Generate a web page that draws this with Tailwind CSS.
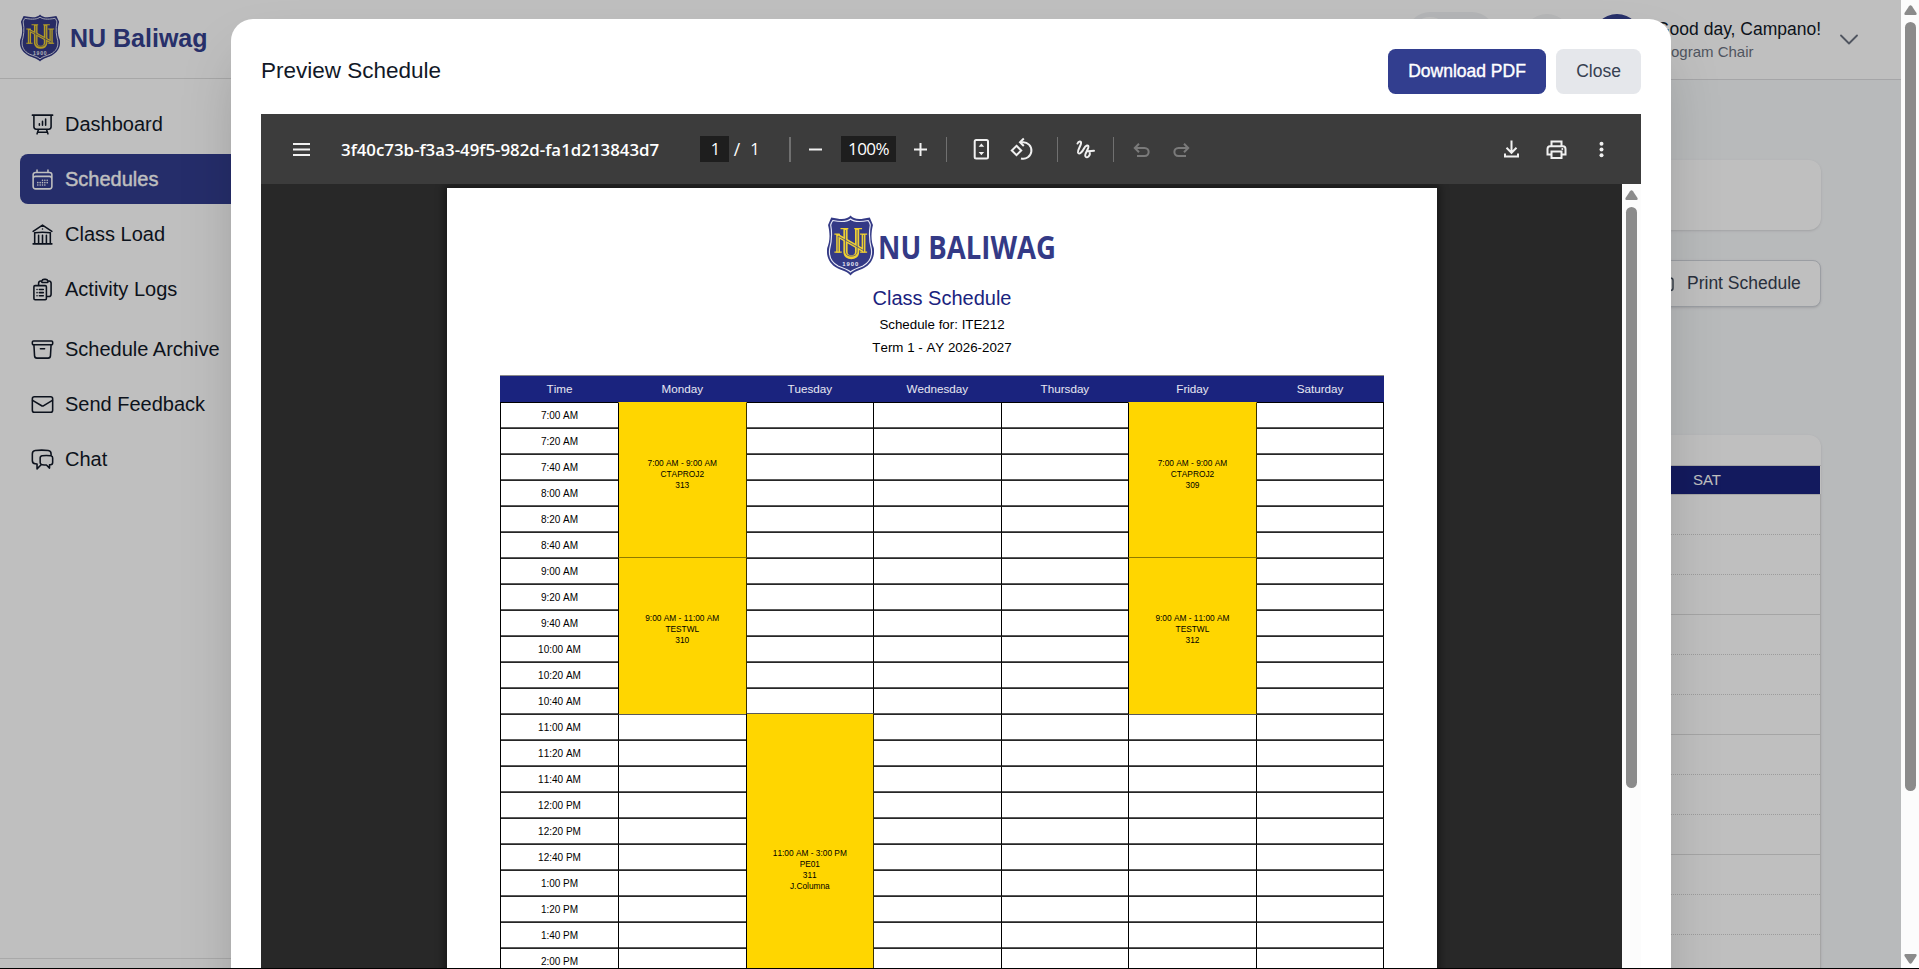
<!DOCTYPE html>
<html lang="en">
<head>
<meta charset="utf-8">
<title>NU Baliwag – Schedules</title>
<script src="https://cdn.jsdelivr.net/npm/@tailwindcss/browser@4"></script>
</head>
<body class="h-[969px] w-[1919px] overflow-hidden bg-black font-['Liberation_Sans',Arial,sans-serif]">

<svg class="hidden">
  <symbol id="crest" viewBox="1 0 44.500 61" preserveAspectRatio="none">
    <path d="M23.300 0.500C25.500 3.500 30 5 36 3.500L41.500 2.500L44.500 10C42.200 20 43 27 45.300 33C46.500 42 43 49 36 53C31 55.500 26 56.500 23.300 60.500C20.500 56.500 15.500 55.500 10.500 53C3.500 49 0 42 1.200 33C3.500 27 4.300 20 2 10L5 2.500L10.500 3.500C16.500 5 21 3.500 23.300 0.500Z" fill="#343a86"/>
    <path d="M23.300 4C26 6.500 31 7.500 40 5.500C41 7 41.500 8 42 10C40.300 20 41.500 28 43 34C44 42 41 47.500 35 51C31 53 26 54 23.300 57C20.500 54 15.500 53 11.500 51C5.500 47.500 2.500 42 3.500 34C5 28 6.200 20 4.500 10C5 8 5.500 7 6.500 5.500C15.500 7.500 20.500 6.500 23.300 4Z" fill="none" stroke="#e8e9f5" stroke-width="1.100"/>
    <g fill="none" stroke="#efd032">
      <path stroke-width="4" d="M18.500 14V37C18.500 44 29.500 44 29.500 37V14"/>
      <path stroke-width="1.300" d="M13.800 13.700H21.200M26.800 13.700H34.200M8 19.200H13M32.300 19.200H39M8 37.200H15M32.300 37.200H39"/>
      <path stroke-width="3.600" d="M11.500 19V37.500M35.600 19V37.500M11 20.500L35.600 35.500"/>
    </g>
    <g fill="none" stroke="#343a86" stroke-width=".7">
      <path d="M18.500 15V37C18.500 42.500 29.500 42.500 29.500 37V15"/>
      <path d="M11.500 21V36.500M35.600 20V36.500M11.500 21L35.600 35.500"/>
    </g>
    <text x="23.500" y="51.500" text-anchor="middle" font-family="Liberation Sans" font-weight="700" font-size="5.600" letter-spacing=".9" fill="#e8e9f5">1900</text>
  </symbol>
</svg>

<div class="relative flex h-[968px] w-[1919px] overflow-hidden">

  <!-- application page -->
  <div class="relative flex h-[968px] w-[1901px] overflow-hidden bg-[#f6f8fa]">
    <aside class="flex w-[300px] shrink-0 flex-col bg-white">
      <div class="flex h-[79px] items-center border-b border-[#dfdfdf] pb-[2px] pl-5">
        <svg class="h-[48px] w-[40px]"><use href="#crest"/></svg>
        <span class="ml-[10px] text-[25px] font-bold leading-none text-[#35408e]">NU Baliwag</span>
      </div>
      <nav class="mt-[20px] flex flex-1 flex-col gap-[5px] pl-5 text-[20px] text-[#111827]" id="nav">
        <a class="flex h-[50px] items-center gap-[10px] rounded-l-[8px] pl-[10px]"><svg class="size-[25px]" viewBox="0 0 24 24" fill="none" stroke="currentColor" stroke-width="1.500" stroke-linecap="round" stroke-linejoin="round"><path d="M3.750 3v11.250A2.250 2.250 0 006 16.500h2.250M3.750 3h-1.500m1.500 0h16.500m0 0h1.500m-1.500 0v11.250A2.250 2.250 0 0118 16.500h-2.250m-7.500 0h7.500m-7.500 0l-1 3m8.500-3l1 3m0 0l.5 1.500m-.5-1.500h-9.500m0 0l-.5 1.500M9 11.250v1.500M12 9v3.750m3-6v6"/></svg>Dashboard</a>
        <a class="flex h-[50px] items-center gap-[10px] rounded-l-[8px] bg-[#323c8e] pl-[10px] text-white [-webkit-text-stroke:0.4px_white]"><svg class="size-[25px]" viewBox="0 0 24 24" fill="none" stroke="currentColor" stroke-width="1.500" stroke-linecap="round" stroke-linejoin="round"><path d="M6.750 3v2.250M17.250 3v2.250M3 18.750V7.500a2.250 2.250 0 0 1 2.250-2.250h13.500A2.250 2.250 0 0 1 21 7.500v11.250m-18 0A2.250 2.250 0 0 0 5.250 21h13.500A2.250 2.250 0 0 0 21 18.750m-18 0v-7.500A2.250 2.250 0 0 1 5.250 9h13.500A2.250 2.250 0 0 1 21 11.250v7.500m-9-6h.008v.008H12v-.008ZM12 15h.008v.008H12V15Zm0 2.250h.008v.008H12v-.008ZM9.750 15h.008v.008H9.750V15Zm0 2.250h.008v.008H9.750v-.008ZM7.500 15h.008v.008H7.500V15Zm0 2.250h.008v.008H7.500v-.008Zm6.750-4.500h.008v.008h-.008v-.008Zm0 2.250h.008v.008h-.008V15Zm0 2.250h.008v.008h-.008v-.008Zm2.250-4.500h.008v.008H16.500v-.008Zm0 2.250h.008v.008H16.500V15Z"/></svg>Schedules</a>
        <a class="flex h-[50px] items-center gap-[10px] pl-[10px]"><svg class="size-[25px]" viewBox="0 0 24 24" fill="none" stroke="currentColor" stroke-width="1.500" stroke-linecap="round" stroke-linejoin="round"><path d="M12 21v-8.250M15.750 21v-8.250M8.250 21v-8.250M3 9l9-6 9 6m-1.500 12V10.332A48.360 48.360 0 0 0 12 9.750c-2.551 0-5.056.2-7.500.582V21M3 21h18M12 6.750h.008v.008H12V6.750Z"/></svg>Class Load</a>
        <a class="flex h-[50px] items-center gap-[10px] pl-[10px]"><svg class="size-[25px]" viewBox="0 0 24 24" fill="none" stroke="currentColor" stroke-width="1.500" stroke-linecap="round" stroke-linejoin="round"><path d="M9 12h3.750M9 15h3.750M9 18h3.750m3 .75H18a2.250 2.250 0 0 0 2.250-2.250V6.108c0-1.135-.845-2.098-1.976-2.192a48.424 48.424 0 0 0-1.123-.08m-5.801 0c-.065.21-.1.433-.1.664 0 .414.336.75.75.75h4.500a.75.75 0 0 0 .75-.75 2.250 2.250 0 0 0-.1-.664m-5.800 0A2.251 2.251 0 0 1 13.500 2.250H15c1.012 0 1.867.668 2.150 1.586m-5.800 0c-.376.023-.75.05-1.124.08C9.095 4.010 8.250 4.973 8.250 6.108V8.250m0 0H4.875c-.621 0-1.125.504-1.125 1.125v11.250c0 .621.504 1.125 1.125 1.125h9.750c.621 0 1.125-.504 1.125-1.125V9.375c0-.621-.504-1.125-1.125-1.125H8.250ZM6.750 12h.008v.008H6.750V12Zm0 3h.008v.008H6.750V15Zm0 3h.008v.008H6.750V18Z"/></svg>Activity Logs</a>
        <a class="mt-[5px] flex h-[50px] items-center gap-[10px] pl-[10px]"><svg class="size-[25px]" viewBox="0 0 24 24" fill="none" stroke="currentColor" stroke-width="1.500" stroke-linecap="round" stroke-linejoin="round"><path d="m20.250 7.500-.625 10.632a2.250 2.250 0 0 1-2.247 2.118H6.622a2.250 2.250 0 0 1-2.247-2.118L3.750 7.500M10 11.250h4M3.375 7.500h17.250c.621 0 1.125-.504 1.125-1.125v-1.500c0-.621-.504-1.125-1.125-1.125H3.375c-.621 0-1.125.504-1.125 1.125v1.500c0 .621.504 1.125 1.125 1.125Z"/></svg>Schedule Archive</a>
        <a class="flex h-[50px] items-center gap-[10px] pl-[10px]"><svg class="size-[25px]" viewBox="0 0 24 24" fill="none" stroke="currentColor" stroke-width="1.500" stroke-linecap="round" stroke-linejoin="round"><rect x="2.250" y="4.500" width="19.500" height="15" rx="2"/><path d="M2.500 8l8.300 5a2.250 2.250 0 0 0 2.400 0L21.500 8"/></svg>Send Feedback</a>
        <a class="flex h-[50px] items-center gap-[10px] pl-[10px]"><svg class="size-[25px]" viewBox="0 0 24 24" fill="none" stroke="currentColor" stroke-width="1.500" stroke-linecap="round" stroke-linejoin="round"><path d="M20.250 8.511c.884.284 1.500 1.128 1.500 2.097v4.286c0 1.136-.847 2.100-1.980 2.193-.34.027-.68.052-1.020.072v3.091l-3-3c-1.354 0-2.694-.055-4.020-.163a2.115 2.115 0 0 1-.825-.242m9.345-8.334a2.126 2.126 0 0 0-.476-.095 48.640 48.640 0 0 0-8.048 0c-1.131.094-1.976 1.057-1.976 2.192v4.286c0 .837.46 1.580 1.155 1.951m9.345-8.334V6.637c0-1.621-1.152-3.026-2.760-3.235A48.455 48.455 0 0 0 11.250 3c-2.115 0-4.198.137-6.240.402-1.608.209-2.760 1.614-2.760 3.235v6.226c0 1.621 1.152 3.026 2.760 3.235.577.075 1.157.14 1.740.194V21l4.155-4.155"/></svg>Chat</a>
      </nav>
      <div class="h-[10px] border-t border-[#e2e2e2]"></div>
    </aside>

    <div class="flex flex-1 flex-col">
      <header class="flex h-[80px] items-start justify-end border-b border-[#dcdddf] bg-white pr-[43px]">
        <div class="mt-[12px] mr-[27px] h-[46px] w-[88px] rounded-full bg-[#f1f2f4] p-[5px]"><div class="size-[36px] rounded-full bg-white"></div></div>
        <div class="mt-[14px] mr-[20px] size-[50px] rounded-full bg-[#f3f4f6]"></div>
        <div class="mt-[14px] mr-[14px] size-[50px] rounded-full bg-[#35408e]"></div>
        <div class="mt-[17px] w-[167px] whitespace-nowrap">
          <p class="text-[17.5px] leading-[24px] text-[#111827]">Good day, Campano!</p>
          <p class="text-[15px] leading-[22px] text-[#6b7280]">Program Chair</p>
        </div>
        <svg class="mt-[33px] ml-[17px] h-[13px] w-[18px]" viewBox="0 0 18 13" fill="none" stroke="#6b7280" stroke-width="1.800" stroke-linecap="round" stroke-linejoin="round"><path d="M1 2.500l8 8 8-8"/></svg>
      </header>
      <main class="flex flex-1 flex-col pl-[30px] pr-[80px] pt-[80px]">
        <div class="h-[70px] shrink-0 rounded-[12px] bg-white shadow-sm"></div>
        <div class="mt-[30px] flex h-[47px] w-[190px] shrink-0 items-center gap-[12px] self-end rounded-[8px] border border-[#cfd3da] bg-white pl-[22px] text-[17.5px] text-[#374151] shadow-sm">
          <svg class="h-[20px] w-[21px] shrink-0" viewBox="0 0 21 20" fill="none" stroke="#4b5563" stroke-width="1.500"><rect x="0" y="4" width="19" height="12.500" rx="2.500"/></svg>
          <span class="whitespace-nowrap">Print Schedule</span>
        </div>
        <div class="mt-[128px] flex flex-1 flex-col rounded-t-[12px] bg-white shadow-sm">
          <div class="h-[31px] shrink-0 border-b border-[#dddddd]"></div>
          <div class="mr-px flex h-[28px] shrink-0 items-center justify-end bg-[#1a237e] pr-[99px] text-[15px] text-white"><span>SAT</span></div>
          <div id="bgRows" class="flex flex-1 flex-col border-r border-t border-[#dddddd]"></div>
        </div>
      </main>
    </div>
    <div class="absolute inset-0 bg-black/25"></div>
  </div>

  <!-- window scrollbar -->
  <div class="flex w-[18px] flex-col items-center bg-[#fcfcfc]">
    <svg class="mt-[5px] h-[10px] w-[13px]" viewBox="0 0 13 10"><path d="M5 1.200Q6.500-.7 8 1.200L12.500 8Q13 10 11.500 10H1.500Q0 10 .5 8Z" fill="#8b8b8b"/></svg>
    <div class="mt-[7px] h-[769px] w-[11px] rounded-full bg-[#8b8b8b]"></div>
    <svg class="mt-[163px] h-[10px] w-[13px] rotate-180" viewBox="0 0 13 10"><path d="M5 1.200Q6.500-.7 8 1.200L12.500 8Q13 10 11.500 10H1.500Q0 10 .5 8Z" fill="#8b8b8b"/></svg>
  </div>

  <!-- preview dialog -->
  <div class="absolute left-[231px] top-[19px] flex h-[1000px] w-[1440px] flex-col rounded-[22px] bg-white px-[30px] pt-[30px] shadow-[0_31px_62px_-15px_rgba(0,0,0,0.25)]">
    <div class="flex h-[45px] shrink-0 items-center justify-between">
      <h2 class="text-[22.5px] leading-none text-[#111827]">Preview Schedule</h2>
      <div class="flex gap-[10px] text-[17.5px]">
        <button class="h-[45px] w-[158px] rounded-[7.5px] bg-[#323e8f] text-white [-webkit-text-stroke:0.4px_white]">Download PDF</button>
        <button class="h-[45px] w-[85px] rounded-[7.5px] bg-[#e5e7eb] text-[#374151]">Close</button>
      </div>
    </div>

    <div class="mt-[20px] flex h-[900px] flex-col bg-[#282828]">
      <div class="flex h-[70px] shrink-0 items-center bg-[#3c3c3c] font-['Open_Sans','Noto_Sans',sans-serif] text-[17.5px] text-white">
        <svg class="ml-[28px] size-[25px]" viewBox="0 0 25 25" stroke="#f1f1f1" stroke-width="2"><path d="M4 7h17M4 12.500h17M4 18h17"/></svg>
        <span id="docTitle" class="ml-[27px] mt-[2px] w-[318px] whitespace-nowrap text-[16.85px] font-semibold">3f40c73b-f3a3-49f5-982d-fa1d213843d7</span>
        <span class="ml-[41px] flex h-[26px] w-[29px] items-center justify-center bg-[#1e1e1e] pl-[2px] text-[16.5px]">1</span>
        <span class="w-[16px] text-center">/</span>
        <span class="w-[20px] text-center text-[16.5px]">1</span>
        <span class="ml-[24px] h-[25px] w-[2px] bg-[#707070]"></span>
        <svg class="ml-[12px] size-[25px]" viewBox="0 0 25 25" stroke="#f1f1f1" stroke-width="2"><path d="M6 12.500h13"/></svg>
        <span class="ml-[13px] flex h-[26px] w-[55px] items-center justify-center bg-[#1e1e1e] text-[17px] tracking-[-0.6px]">100%</span>
        <svg class="ml-[12px] size-[25px]" viewBox="0 0 25 25" stroke="#f1f1f1" stroke-width="2"><path d="M6 12.500h13M12.500 6v13"/></svg>
        <span class="ml-[13px] h-[25px] w-px bg-[#707070]"></span>
        <svg class="ml-[22px] size-[25px]" viewBox="0 0 25 25" fill="none" stroke="#f1f1f1" stroke-width="2"><rect x="5.700" y="3" width="13.300" height="18.500" rx="1.500"/><path d="M12.400 6.600l2.800 3.200h-5.600zM12.400 18.200l2.800-3.200h-5.600z" fill="#f1f1f1" stroke="none"/></svg>
        <svg class="ml-[15px] size-[25px]" viewBox="0 0 25 25" fill="none" stroke="#f1f1f1" stroke-width="2"><path d="M7.500 8.800L12.200 13.500L7.500 18.200L2.800 13.500Z"/><path d="M11.500 5.200H13.500A8.300 8.300 0 1 1 12 21.500"/><path d="M14.800 1.500L11 5.200L14.800 9"/></svg>
        <span class="ml-[23px] h-[25px] w-px bg-[#707070]"></span>
        <svg class="ml-[15px] size-[25px]" viewBox="0 0 25 25" fill="none" stroke="#f1f1f1" stroke-width="2" stroke-linecap="round"><path d="M4.500 6.500C5.500 4 8.500 3.500 8 6.500C7.500 9.500 4.300 13 5 15.500C6 18.500 9.500 14.500 11 11.500C12.500 8.500 16 7 15.300 10.500C14.500 14 11 17.500 12.500 19.500C14.500 22 17.500 18 16.800 15.500C16 13 13 14.500 15 14.200L21 13.800"/></svg>
        <span class="ml-[15px] h-[25px] w-px bg-[#707070]"></span>
        <svg class="ml-[15px] size-[25px]" viewBox="0 0 25 25" fill="none" stroke="#7a7a7a" stroke-width="2"><path d="M8 19H15.500C21 19 21 11 15.500 11H6"/><path d="M10 6.800L5.800 11L10 15.200"/></svg>
        <svg class="ml-[15px] size-[25px]" viewBox="0 0 25 25" fill="none" stroke="#7a7a7a" stroke-width="2"><path d="M17 19H9.500C4 19 4 11 9.500 11H19"/><path d="M15 6.800L19.200 11L15 15.200"/></svg>
        <svg class="ml-[305px] size-[25px]" viewBox="0 0 25 25" fill="none" stroke="#f1f1f1" stroke-width="2"><path d="M12.500 3.500V15.500M7.500 10.800L12.500 15.800L17.500 10.800M6 16.500V19.500H19V16.500"/></svg>
        <svg class="ml-[20px] size-[25px]" viewBox="0 0 25 25" fill="none" stroke="#f1f1f1" stroke-width="2"><path d="M7.500 8.500V4.500H17.500V8.500M7 17.500H3.500V12Q3.500 9.200 6 9.200H19Q21.500 9.200 21.500 12V17.500H18M7.500 14.500H17.500V21H7.500Z"/><circle cx="18.300" cy="12" r="1" fill="#f1f1f1" stroke="none"/></svg>
        <svg class="ml-[20px] size-[25px]" viewBox="0 0 25 25" fill="#f1f1f1"><circle cx="12.500" cy="6.800" r="2"/><circle cx="12.500" cy="12.500" r="2"/><circle cx="12.500" cy="18.200" r="2"/></svg>
      </div>

      <div class="flex min-h-0 flex-1 overflow-hidden">
        <div class="flex flex-1 overflow-hidden pl-[186px] pt-[4px]">
          <div class="flex h-[1400px] w-[990px] flex-col items-center bg-white pt-[27px] text-black shadow-[0_0_8px_3px_rgba(0,0,0,0.4)] [font-kerning:none]">
            <div class="ml-[380px] flex h-[61px] w-[240px] shrink-0 self-start">
              <svg class="h-[61px] w-[47px]"><use href="#crest"/></svg>
              <svg class="h-[61px] w-[190px] overflow-visible" viewBox="0 0 190 61"><text x="4" y="43.500" textLength="178" lengthAdjust="spacingAndGlyphs" font-family="Open Sans" font-weight="700" font-size="32.500" fill="#343a86">NU BALIWAG</text></svg>
            </div>
            <p class="mt-[9px] text-[20px] leading-[26px] text-[#1a237e]">Class Schedule</p>
            <p class="mt-[3px] text-[13.33px] leading-[22px]">Schedule for: ITE212</p>
            <p class="mt-[1px] text-[13.33px] leading-[22px]">Term 1 - AY 2026-2027</p>
            <div id="sched" class="mt-[16px] ml-[53px] grid auto-rows-[26px] grid-cols-[118px_repeat(6,127.55px)] grid-rows-[28px] self-start border-l border-black bg-white text-[10px] leading-none"></div>
          </div>
        </div>
        <div class="flex w-[19px] flex-col items-center bg-[#fcfcfc]">
          <svg class="mt-[6px] h-[10px] w-[13px] shrink-0" viewBox="0 0 13 10"><path d="M5 1.200Q6.500-.7 8 1.200L12.500 8Q13 10 11.500 10H1.500Q0 10 .5 8Z" fill="#8b8b8b"/></svg>
          <div class="mt-[7px] h-[581px] w-[11px] shrink-0 rounded-full bg-[#8b8b8b]"></div>
        </div>
      </div>
    </div>
  </div>
</div>

<script>
  const sched = document.getElementById('sched');
  function cell(cls, html, col, row, span) {
    const d = document.createElement('div');
    d.className = cls;
    d.innerHTML = html;
    d.style.gridColumn = col;
    d.style.gridRow = row + ' / span ' + (span || 1);
    sched.appendChild(d);
  }
  ['Time', 'Monday', 'Tuesday', 'Wednesday', 'Thursday', 'Friday', 'Saturday'].forEach((t, i) =>
    cell('flex items-center justify-center border-t border-t-[#8a8a8a] border-b border-b-black bg-[#1a237e] text-[11.67px] text-white/90 -ml-px', t, i + 1, 1));

  // Class blocks: [column, first slot, slot count, lines]
  const blocks = [
    [2, 0, 6, ['7:00 AM - 9:00 AM', 'CTAPROJ2', '313', '&nbsp;']],
    [2, 6, 6, ['9:00 AM - 11:00 AM', 'TESTWL', '310', '&nbsp;']],
    [3, 12, 12, ['11:00 AM - 3:00 PM', 'PE01', '311', 'J.Columna']],
    [6, 0, 6, ['7:00 AM - 9:00 AM', 'CTAPROJ2', '309', '&nbsp;']],
    [6, 6, 6, ['9:00 AM - 11:00 AM', 'TESTWL', '312', '&nbsp;']],
  ];
  for (let s = 0; s < 24; s++) {
    const m = 420 + s * 20, h = Math.floor(m / 60);
    const label = (h > 12 ? h - 12 : h) + ':' + String(m % 60).padStart(2, '0') + (h < 12 ? ' AM' : ' PM');
    for (let c = 1; c <= 7; c++) {
      if (blocks.some(b => b[0] === c && s >= b[1] && s < b[1] + b[2])) continue;
      cell('flex items-center justify-center border-r border-b border-r-black border-b-[#262626] shadow-[inset_0_-1px_0_#5a5a5a]', c === 1 && s < 22 ? label : '', c, s + 2);
    }
  }
  blocks.forEach(b =>
    cell((b[1] === 0 ? '-mt-px border-t-[#ffd600] ' : b[1] === 6 ? '-mt-[2px] border-t-[#8f7a00] border-b border-b-[#5a5a5a] ' : '-mt-[2px] border-t-[#5a5a5a] ') +
      '-ml-px flex flex-col items-center justify-center border-t border-r border-l border-l-black border-r-[#3a3200] bg-[#ffd600] pb-[2px] text-[8.33px] leading-[11px]',
      b[3].map(t => '<span>' + t + '</span>').join(''), b[0], b[1] + 2, b[2]));

  const bg = document.getElementById('bgRows');
  for (let i = 1; i <= 11; i++) {
    const r = document.createElement('div');
    r.className = i % 3 === 0 ? 'h-[40px] shrink-0 border-b border-[#dddddd]' : 'h-[40px] shrink-0 border-b border-dotted border-[#d0d0d0]';
    bg.appendChild(r);
  }
</script>
</body>
</html>
